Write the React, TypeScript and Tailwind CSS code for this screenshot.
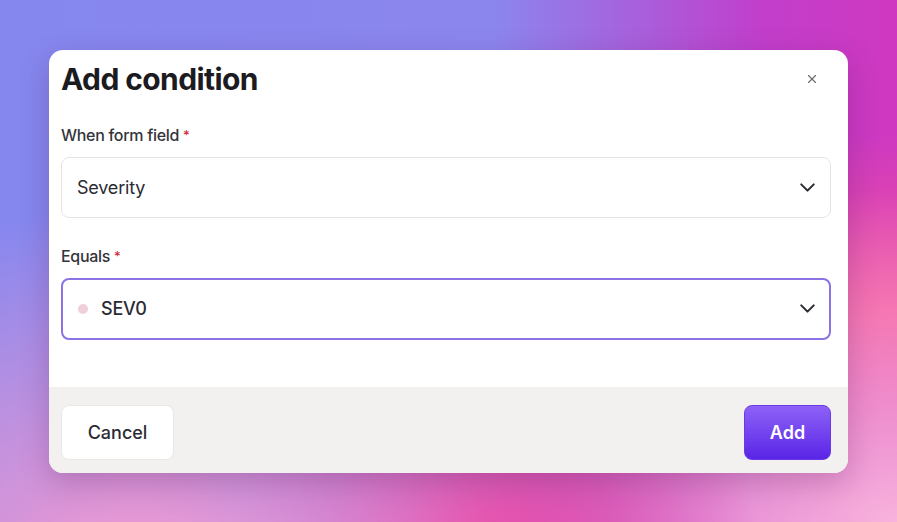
import React from 'react';
import { X, ChevronDown } from 'lucide-react';

function Label({ children }: { children: React.ReactNode }) {
  return (
    <div className="text-[16px] leading-[20px] font-medium text-[#34343b] tracking-[-0.3px]">
      {children}
      <span className="text-[#d4263a] ml-1 align-top text-[13px]">*</span>
    </div>
  );
}

export default function App() {
  return (
    <div
      className="w-[897px] h-[522px] flex items-center justify-center bg-[radial-gradient(ellipse_at_15%_110%,#f59ad0_0%,transparent_45%),radial-gradient(ellipse_at_55%_108%,#e8309a_0%,transparent_38%),radial-gradient(ellipse_at_100%_100%,#f8b3dc_0%,transparent_45%),radial-gradient(ellipse_at_100%_60%,#f4559a_0%,transparent_40%),linear-gradient(90deg,#8587ef_0%,#8b86ee_55%,#c13ecb_85%,#cf38c0_100%)]"
      style={{ fontFamily: 'Inter, "Noto Sans", sans-serif' }}
    >
      <div className="w-[799px] h-[423px] bg-white rounded-[14px] shadow-[0_10px_30px_rgba(80,20,80,0.25)] overflow-hidden flex flex-col">
        {/* Body */}
        <div className="flex-1 pl-3 pr-[17px] pt-[9px]">
          <div className="flex items-center justify-between">
            <h2 className="text-[30px] leading-[40px] font-bold text-[#1c1b22] tracking-[-0.6px]">
              Add condition
            </h2>
            <button className="mr-[12px] text-[#6b6b70]">
              <X size={14} strokeWidth={2} />
            </button>
          </div>

          <div className="mt-[26px]">
            <Label>When form field</Label>
            <div className="mt-[12px] h-[61px] rounded-[8px] border border-[#e4e4e6] flex items-center justify-between pl-[15px] pr-[10px]">
              <span className="text-[18px] text-[#2b2b33] tracking-[-0.2px]">Severity</span>
              <ChevronDown size={25} strokeWidth={2} className="text-[#2b2b33]" />
            </div>
          </div>

          <div className="mt-[28px]">
            <Label>Equals</Label>
            <div className="mt-[12px] h-[62px] rounded-[8px] border-2 border-[#8b73e6] flex items-center justify-between pl-[15px] pr-[9px]">
              <div className="flex items-center gap-[13px]">
                <span className="w-[10px] h-[10px] rounded-full bg-[#efcfd9]" />
                <span className="text-[18px] font-medium text-[#2b2b33] tracking-[-0.2px]">SEV0</span>
              </div>
              <ChevronDown size={25} strokeWidth={2} className="text-[#2b2b33]" />
            </div>
          </div>
        </div>

        {/* Footer */}
        <div className="h-[86px] bg-[#f2f1f0] flex items-start justify-between pl-3 pr-[17px] pt-[18px]">
          <button className="h-[55px] w-[113px] bg-white rounded-[8px] border border-[#e8e7e5] text-[18px] font-medium text-[#2b2b33]">
            Cancel
          </button>
          <button className="h-[55px] w-[87px] rounded-[8px] bg-[linear-gradient(180deg,#8d62f7_0%,#5a25e6_100%)] border border-[#6a3ae8] text-[18px] font-semibold text-white">
            Add
          </button>
        </div>
      </div>
    </div>
  );
}
